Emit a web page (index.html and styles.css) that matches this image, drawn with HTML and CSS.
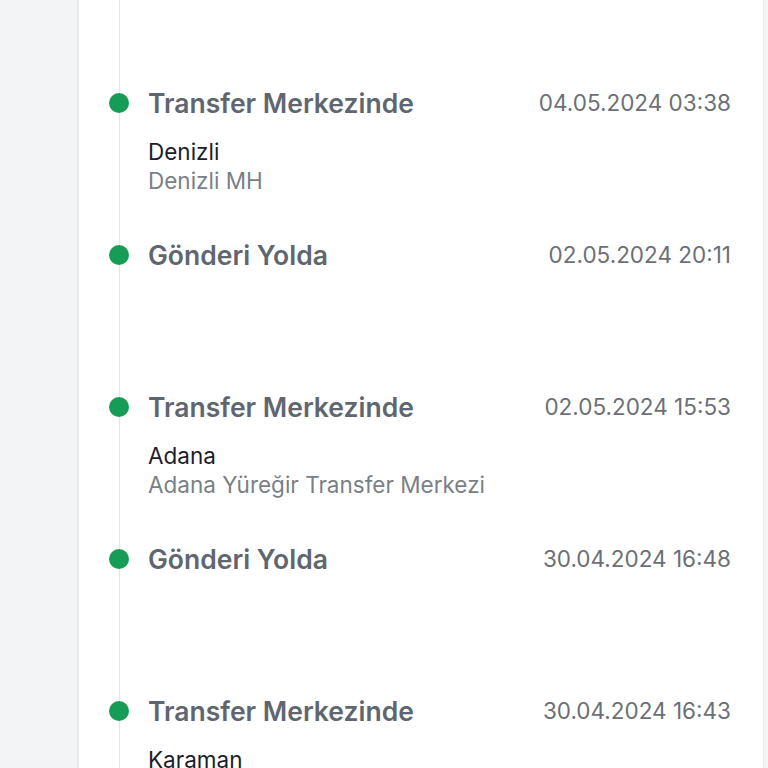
FILE: index.html
```html
<!DOCTYPE html>
<html lang="tr">
<head>
    <meta charset="UTF-8">
    <meta name="viewport" content="width=device-width, initial-scale=1.0">
    <title>Gönderi Takip</title>
    <link rel="stylesheet" href="styles.css">
</head>
<body>
    <main class="card">
        <ul class="timeline">
            <li class="event">
                <span class="dot"></span>
                <div class="event-head">
                    <h3 class="status">Transfer Merkezinde</h3>
                    <span class="date">04.05.2024 03:38</span>
                </div>
                <p class="city">Denizli</p>
                <p class="branch">Denizli MH</p>
            </li>
            <li class="event">
                <span class="dot"></span>
                <div class="event-head">
                    <h3 class="status">Gönderi Yolda</h3>
                    <span class="date">02.05.2024 20:11</span>
                </div>
            </li>
            <li class="event">
                <span class="dot"></span>
                <div class="event-head">
                    <h3 class="status">Transfer Merkezinde</h3>
                    <span class="date">02.05.2024 15:53</span>
                </div>
                <p class="city">Adana</p>
                <p class="branch">Adana Yüreğir Transfer Merkezi</p>
            </li>
            <li class="event">
                <span class="dot"></span>
                <div class="event-head">
                    <h3 class="status">Gönderi Yolda</h3>
                    <span class="date">30.04.2024 16:48</span>
                </div>
            </li>
            <li class="event">
                <span class="dot"></span>
                <div class="event-head">
                    <h3 class="status">Transfer Merkezinde</h3>
                    <span class="date">30.04.2024 16:43</span>
                </div>
                <p class="city">Karaman</p>
            </li>
        </ul>
    </main>
</body>
</html>
```

FILE: styles.css
```css
body {
    margin: 0;
    padding: 0;
    background-color: #f3f4f6;
    font-family: Inter, "Noto Sans", Arial, sans-serif;
    height: 768px;
    overflow: hidden;
}
.card {
    margin-left: 77px;
    width: 684px;
    min-height: 768px;
    background-color: #ffffff;
    border-left: 2px solid #e9eaee;
    border-right: 1px solid #e9eaee;
}
.timeline {
    list-style: none;
    margin: 0 0 0 40px;
    padding: 87px 0 0 0;
    border-left: 1px solid #e3e5e9;
    min-height: 768px;
    box-sizing: border-box;
}
.event {
    position: relative;
    height: 152px;
    padding: 0 32px 0 28px;
}
.dot {
    position: absolute;
    left: -11px;
    top: 6px;
    width: 20px;
    height: 20px;
    border-radius: 50%;
    background-color: #179c55;
}
.event-head {
    display: flex;
    justify-content: space-between;
    align-items: center;
}
.status {
    margin: 0;
    font-size: 26.5px;
    line-height: 32px;
    font-weight: 600;
    color: #5f6670;
}
.date {
    font-size: 22.5px;
    line-height: 30px;
    color: #6b7078;
}
.city {
    margin: 18px 0 0;
    font-size: 22.5px;
    line-height: 29px;
    color: #1c1d2a;
}
.branch {
    margin: 0;
    font-size: 22.5px;
    line-height: 29px;
    color: #7a7f86;
}
```
